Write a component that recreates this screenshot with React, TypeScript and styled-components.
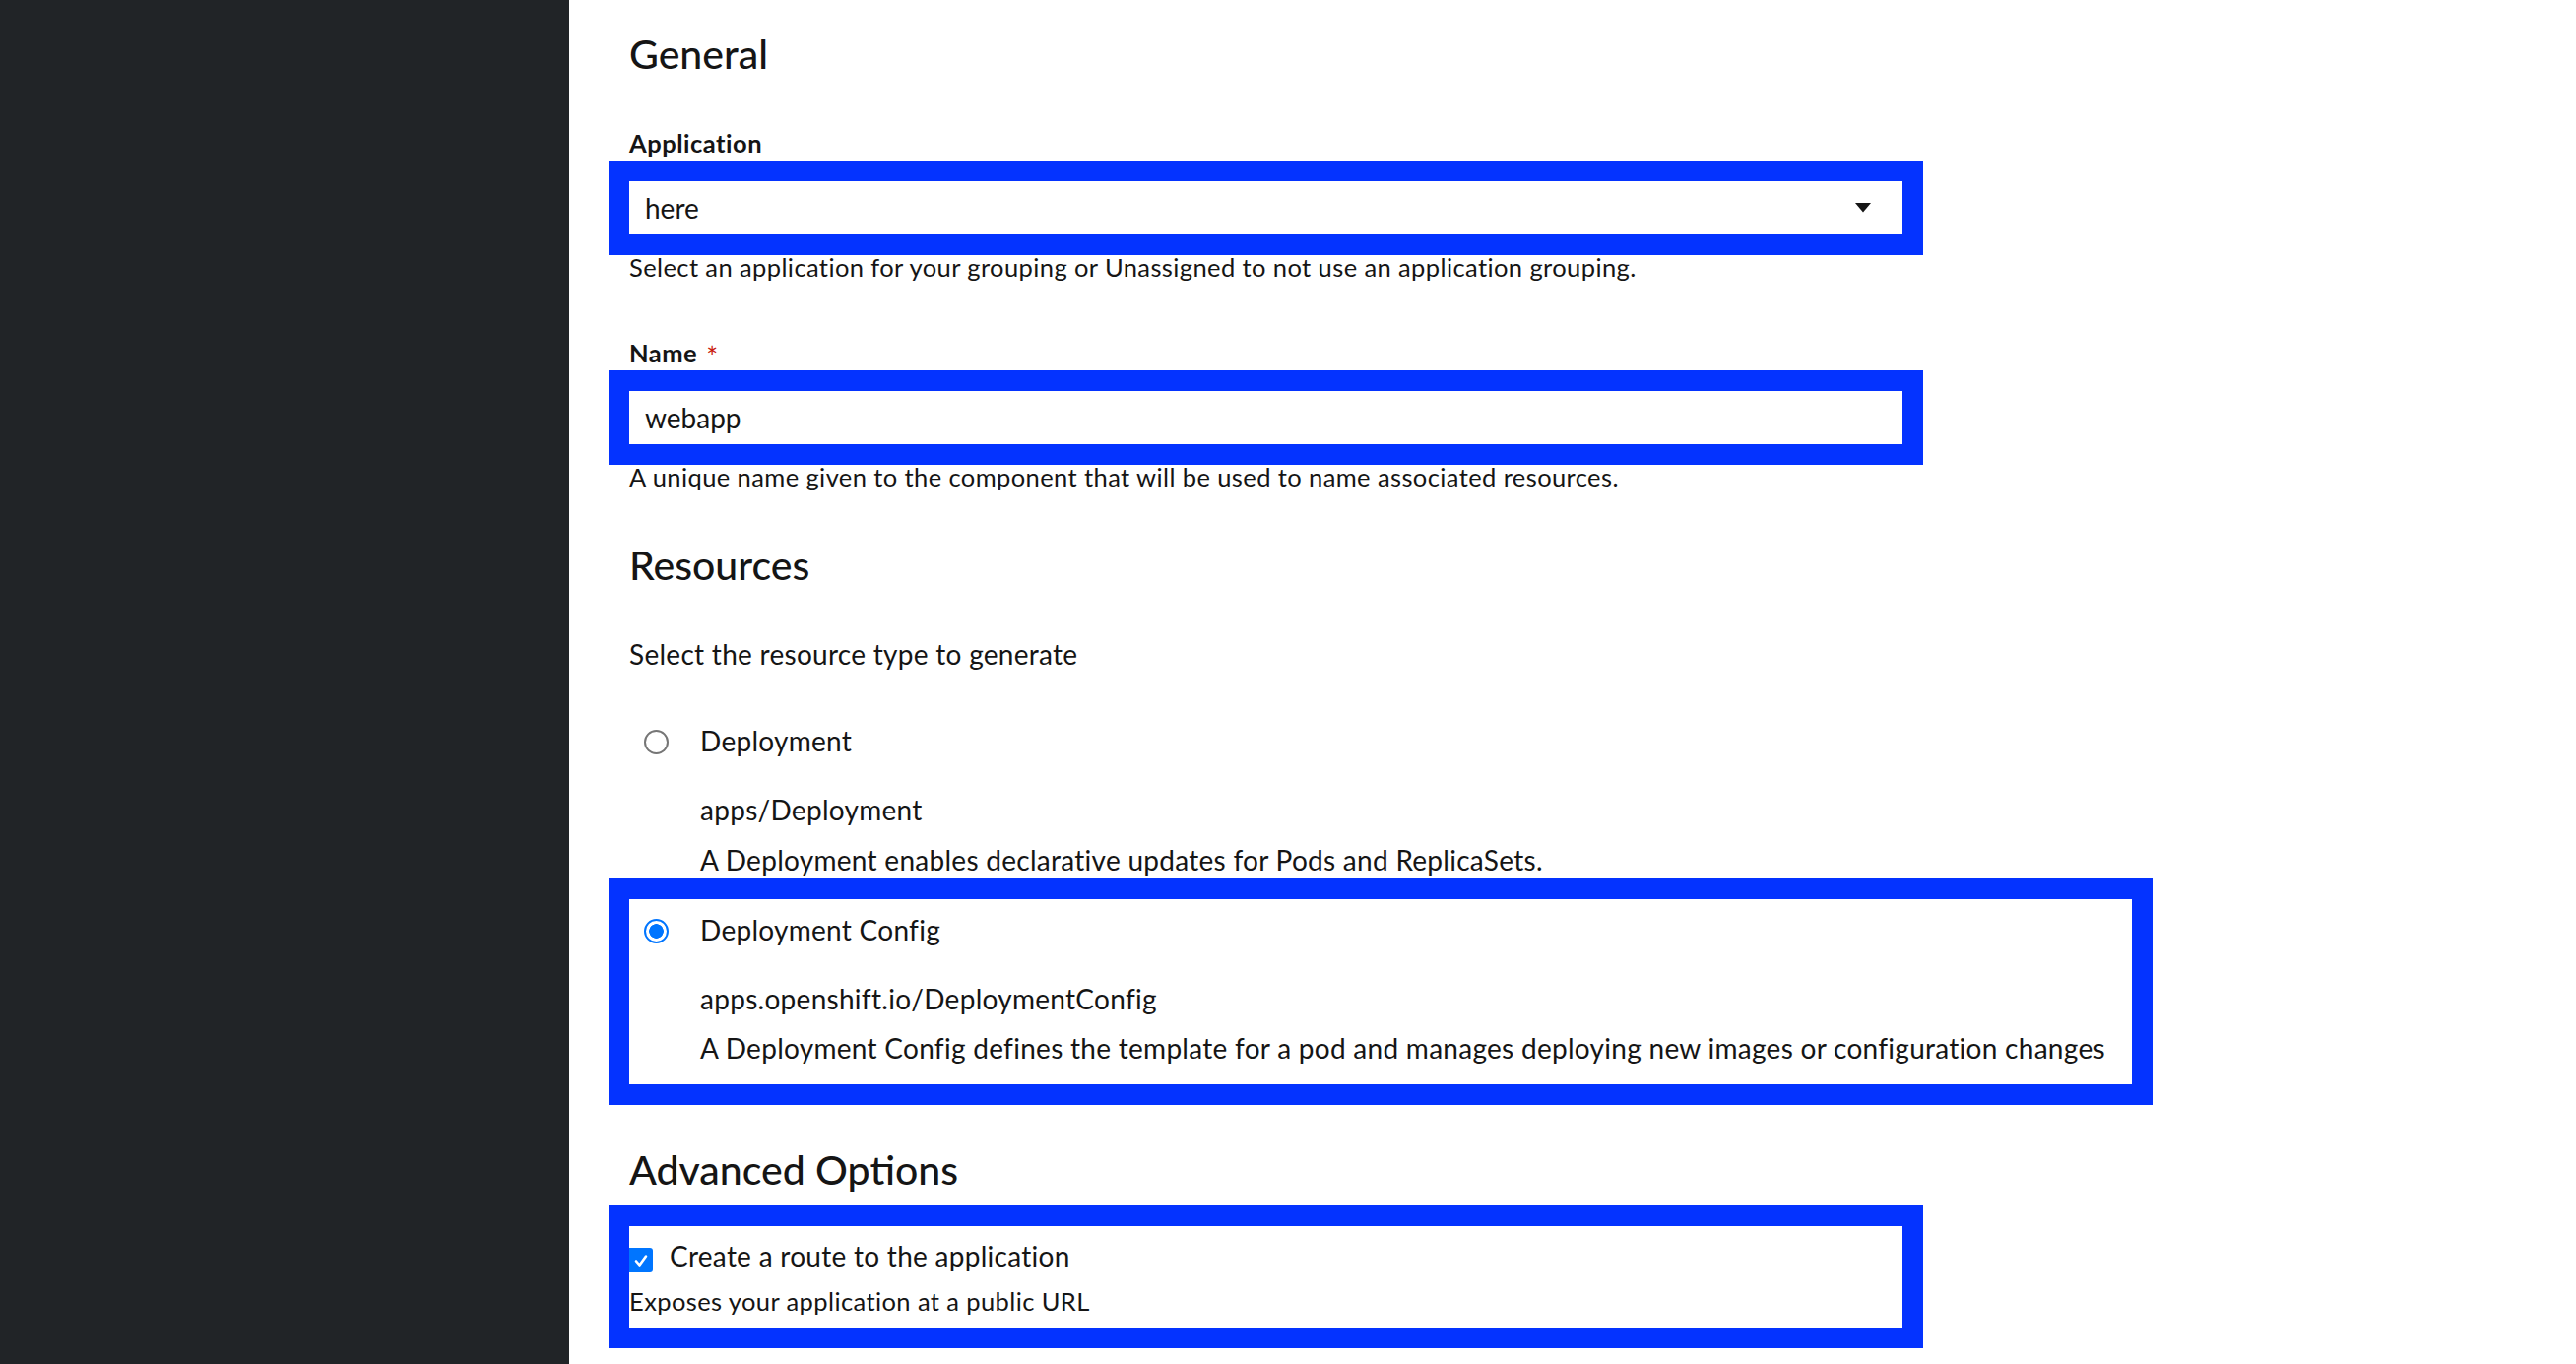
import React from 'react';
import styled, { createGlobalStyle } from 'styled-components';

const GlobalStyle = createGlobalStyle`
  html, body {
    margin: 0;
    padding: 0;
    background: #ffffff;
  }
  body {
    font-family: Lato, "Open Sans", "Liberation Sans", sans-serif;
    color: #151515;
  }
  * { box-sizing: border-box; }
`;

const Page = styled.div`
  display: flex;
  min-height: 1385px;
`;

const Sidebar = styled.aside`
  flex: none;
  width: 578px;
  background: #212427;
`;

const Main = styled.main`
  flex: 1;
  display: flex;
  flex-direction: column;
  align-items: flex-start;
  padding: 30px 0 0 61px;
`;

const Heading = styled.h2<{ $mt?: number }>`
  margin: ${(p) => p.$mt ?? 0}px 0 0;
  font-size: 41px;
  line-height: 50px;
  font-weight: 500;
  color: #151515;
`;

const FieldLabel = styled.label<{ $mt: number }>`
  display: block;
  height: 30px;
  margin-top: ${(p) => p.$mt}px;
  font-size: 25.5px;
  letter-spacing: 0.5px;
  line-height: 30px;
  font-weight: 700;
`;

const Required = styled.span`
  color: #c9190b;
  margin-left: 9px;
  font-size: 28px;
  line-height: 0;
  font-weight: 400;
  vertical-align: -5px;
`;

const Highlight = styled.div<{ $width: number; $mt: number }>`
  width: ${(p) => p.$width}px;
  margin-top: ${(p) => p.$mt}px;
  margin-left: -21px;
  border: 21px solid #0433ff;
  background: #ffffff;
`;

const SelectBox = styled.div`
  display: flex;
  align-items: center;
  justify-content: space-between;
  height: 54px;
  padding: 0 32px 0 16px;
  font-size: 28px;
`;

const TextInput = styled.input`
  display: block;
  width: 100%;
  height: 54px;
  padding: 0 16px;
  border: none;
  outline: none;
  background: #ffffff;
  font-family: inherit;
  font-size: 28px;
  color: #151515;
`;

const HelperText = styled.div<{ $mt?: number }>`
  margin-top: ${(p) => p.$mt ?? 0}px;
  font-size: 25.5px;
  letter-spacing: 0.4px;
  line-height: 20px;
  color: #151515;
  white-space: nowrap;
`;

const BodyText = styled.p<{ $mt: number; $indent?: number }>`
  margin: ${(p) => p.$mt}px 0 0 ${(p) => p.$indent ?? 0}px;
  font-size: 28px;
  letter-spacing: 0.28px;
  line-height: 36px;
  white-space: nowrap;
`;

const OptionRow = styled.label<{ $mt?: number }>`
  display: flex;
  align-items: center;
  gap: 32px;
  margin-top: ${(p) => p.$mt ?? 0}px;
  padding-left: 15px;
  font-size: 28px;
  letter-spacing: 0.28px;
  line-height: 36px;
`;

const Radio = styled.span<{ $checked?: boolean }>`
  flex: none;
  width: 25px;
  height: 25px;
  margin-top: 3px;
  border-radius: 50%;
  border: 2px solid ${(p) => (p.$checked ? '#0075ff' : '#767676')};
  background: ${(p) =>
    p.$checked ? 'radial-gradient(circle, #0075ff 0 7px, #ffffff 7.6px)' : '#ffffff'};
`;

const OptionPanel = styled.div`
  padding: 13px 0 19px;
`;

const RoutePanel = styled.div`
  padding: 12px 0 17px;
`;

const CheckRow = styled.label`
  display: flex;
  align-items: flex-start;
  gap: 17px;
  font-size: 28px;
  letter-spacing: 0.28px;
  line-height: 36px;
`;

const Checkbox = styled.span`
  flex: none;
  display: flex;
  align-items: center;
  justify-content: center;
  width: 24px;
  height: 25px;
  margin-top: 10px;
  border-radius: 0 3px 3px 0;
  background: #0075ff;
`;

const CaretDown = () => (
  <svg width="16" height="10" viewBox="0 0 16 10" aria-hidden="true">
    <polygon points="0,0 16,0 8,9.5" fill="#151515" />
  </svg>
);

const CheckMark = () => (
  <svg width="16" height="16" viewBox="0 0 16 16" aria-hidden="true">
    <path d="M3 8.5 L6.5 12.5 L13 3.5" stroke="#ffffff" strokeWidth="2.6" fill="none" strokeLinecap="round" strokeLinejoin="round" />
  </svg>
);

export default function App() {
  return (
    <>
      <GlobalStyle />
      <Page>
        <Sidebar />
        <Main>
          <Heading>General</Heading>

          <FieldLabel $mt={50}>Application</FieldLabel>
          <Highlight $width={1335} $mt={3}>
            <SelectBox>
              <span>here</span>
              <CaretDown />
            </SelectBox>
          </Highlight>
          <HelperText $mt={2}>
            Select an application for your grouping or Unassigned to not use an application grouping.
          </HelperText>

          <FieldLabel $mt={62}>
            Name<Required>*</Required>
          </FieldLabel>
          <Highlight $width={1335} $mt={3}>
            <TextInput readOnly value="webapp" />
          </Highlight>
          <HelperText $mt={2}>
            A unique name given to the component that will be used to name associated resources.
          </HelperText>

          <Heading $mt={55}>Resources</Heading>
          <BodyText $mt={47}>Select the resource type to generate</BodyText>

          <OptionRow $mt={52}>
            <Radio />
            Deployment
          </OptionRow>
          <BodyText $mt={34} $indent={72}>apps/Deployment</BodyText>
          <BodyText $mt={15} $indent={72}>
            A Deployment enables declarative updates for Pods and ReplicaSets.
          </BodyText>

          <Highlight $width={1568} $mt={1}>
            <OptionPanel>
              <OptionRow>
                <Radio $checked />
                Deployment Config
              </OptionRow>
              <BodyText $mt={34} $indent={72}>apps.openshift.io/DeploymentConfig</BodyText>
              <BodyText $mt={14} $indent={72}>
                A Deployment Config defines the template for a pod and manages deploying new images or configuration changes
              </BodyText>
            </OptionPanel>
          </Highlight>

          <Heading $mt={41}>Advanced Options</Heading>
          <Highlight $width={1335} $mt={11}>
            <RoutePanel>
              <CheckRow>
                <Checkbox>
                  <CheckMark />
                </Checkbox>
                Create a route to the application
              </CheckRow>
              <HelperText $mt={18}>Exposes your application at a public URL</HelperText>
            </RoutePanel>
          </Highlight>
        </Main>
      </Page>
    </>
  );
}
